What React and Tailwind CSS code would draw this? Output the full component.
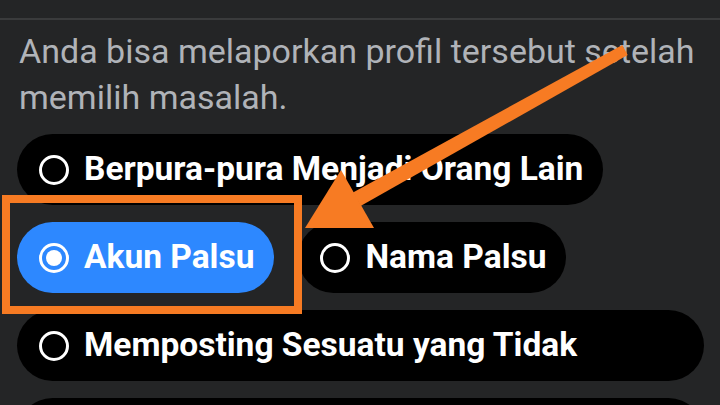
import React from "react";

const options = [
  { label: "Berpura-pura Menjadi Orang Lain" },
  { label: "Akun Palsu", selected: true },
  { label: "Nama Palsu" },
  { label: "Memposting Sesuatu yang Tidak", wide: true },
  { label: "Pelecehan atau Perundungan", wide: true },
];

const Radio = ({ selected }) => (
  <span className="flex h-[30px] w-[30px] shrink-0 items-center justify-center rounded-full border-[3px] border-white">
    {selected && <span className="h-[16px] w-[16px] rounded-full bg-white" />}
  </span>
);

const Chip = ({ label, selected, wide }) => (
  <div
    className={`flex h-[71px] items-center gap-[15px] rounded-full pl-[22px] pr-[20px] ${
      selected ? "bg-[#2d88ff]" : "bg-black"
    } ${wide ? "w-full" : ""}`}
  >
    <Radio selected={selected} />
    <span className="whitespace-nowrap text-[33.5px] font-bold text-white">{label}</span>
  </div>
);

export default function App() {
  return (
    <div
      className="relative h-[405px] w-[720px] overflow-hidden bg-[#242526]"
      style={{ fontFamily: "Roboto, 'Liberation Sans', sans-serif" }}
    >
      <div className="h-[18px]" />
      <div className="h-[2px] bg-[#3a3b3c]" />

      <div className="pl-[17px] pr-[16px] pt-[8px]">
        <p className="pl-[2px] text-[34px] leading-[46px] text-[#b0b3b8]">
          Anda bisa melaporkan profil tersebut setelah memilih masalah.
        </p>

        <div className="mt-[14px] flex flex-wrap gap-x-[24px] gap-y-[17px]">
          {options.map((o) => (
            <Chip key={o.label} {...o} />
          ))}
        </div>
      </div>

      {/* highlight box */}
      <div className="absolute left-[2px] top-[195px] h-[119px] w-[300px] border-[8px] border-[#f77b23]" />

      {/* arrow */}
      <svg className="pointer-events-none absolute left-0 top-0" width="720" height="405" viewBox="0 0 720 405">
        <polygon points="360.6,206.1 353,192.5 622.3,45 627.7,55" fill="#f77b23" />
        <polygon points="305,228 341,170 374,228" fill="#f77b23" />
      </svg>
    </div>
  );
}
